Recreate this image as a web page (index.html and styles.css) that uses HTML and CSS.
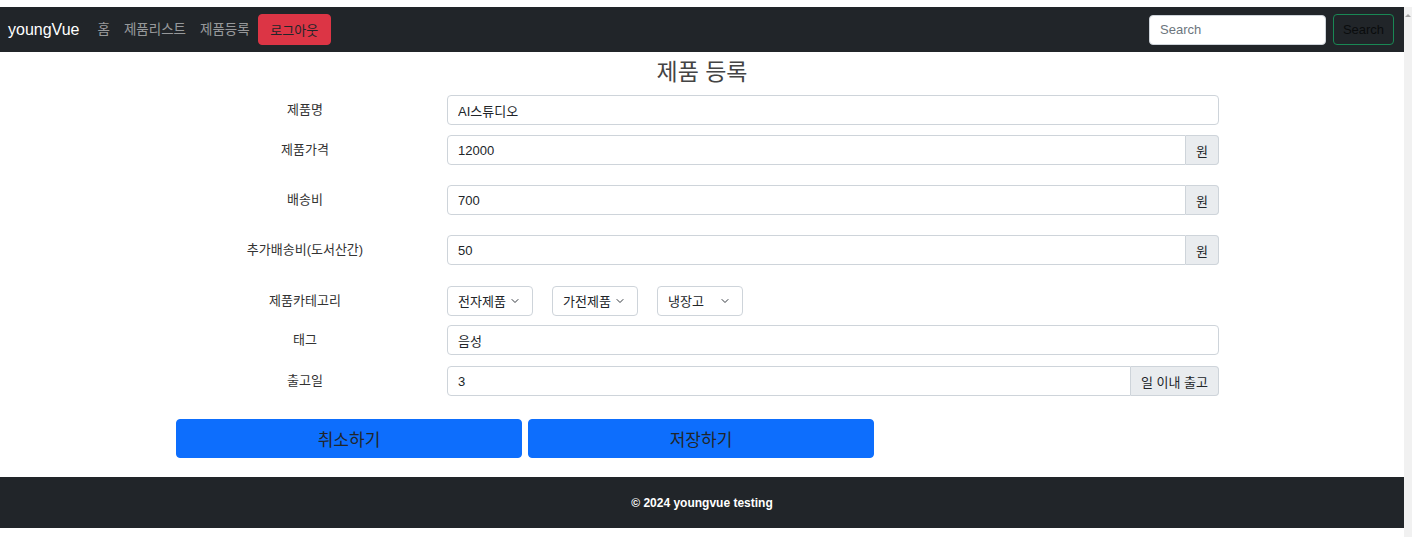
FILE: index.html
```html
<!DOCTYPE html>
<html lang="ko">
<head>
<meta charset="utf-8">
<title>youngVue - 제품 등록</title>
<link rel="stylesheet" href="styles.css">
</head>
<body>
<div class="top-strip"></div>
<div class="shell">
  <div class="page">
    <nav class="navbar">
      <a class="brand" href="#">youngVue</a>
      <ul class="nav-links">
        <li><a href="#">홈</a></li>
        <li><a href="#">제품리스트</a></li>
        <li><a href="#">제품등록</a></li>
      </ul>
      <button class="btn-logout" type="button">로그아웃</button>
      <form class="search">
        <input class="search-input" type="text" placeholder="Search">
        <button class="search-btn" type="button">Search</button>
      </form>
    </nav>

    <main class="content">
      <h2 class="title">제품 등록</h2>
      <form class="product-form">
        <div class="form-row mb-10">
          <label class="form-label">제품명</label>
          <input class="form-control" type="text" value="AI스튜디오">
        </div>
        <div class="form-row mb-20">
          <label class="form-label">제품가격</label>
          <div class="input-group">
            <input class="form-control" type="text" value="12000">
            <span class="group-text">원</span>
          </div>
        </div>
        <div class="form-row mb-20">
          <label class="form-label">배송비</label>
          <div class="input-group">
            <input class="form-control" type="text" value="700">
            <span class="group-text">원</span>
          </div>
        </div>
        <div class="form-row mb-21">
          <label class="form-label">추가배송비(도서산간)</label>
          <div class="input-group">
            <input class="form-control" type="text" value="50">
            <span class="group-text">원</span>
          </div>
        </div>
        <div class="form-row mb-9">
          <label class="form-label">제품카테고리</label>
          <div class="selects">
            <select class="form-select"><option>전자제품</option></select>
            <select class="form-select"><option>가전제품</option></select>
            <select class="form-select"><option>냉장고</option></select>
          </div>
        </div>
        <div class="form-row mb-11">
          <label class="form-label">태그</label>
          <input class="form-control" type="text" value="음성">
        </div>
        <div class="form-row">
          <label class="form-label">출고일</label>
          <div class="input-group">
            <input class="form-control" type="text" value="3">
            <span class="group-text">일 이내 출고</span>
          </div>
        </div>
        <div class="actions">
          <button class="btn-primary" type="button">취소하기</button>
          <button class="btn-primary" type="button">저장하기</button>
        </div>
      </form>
    </main>

    <footer class="footer">© 2024 youngvue testing</footer>
    <div class="bottom-strip"></div>
  </div>
  <div class="scrollbar"><span class="scroll-arrow"></span></div>
</div>
</body>
</html>
```

FILE: styles.css
```css
* { box-sizing: border-box; }

html, body {
  margin: 0;
  padding: 0;
  background: #ffffff;
}

body {
  font-family: "Liberation Sans", "Noto Sans CJK KR", Arial, sans-serif;
  font-size: 13px;
  color: #212529;
}

.top-strip {
  height: 7px;
  background: #ffffff;
}

.shell {
  display: flex;
  height: 530px;
}

.page {
  flex: 1;
  display: flex;
  flex-direction: column;
  min-width: 0;
}

.scrollbar {
  width: 8px;
  background: #f1f1f1;
  display: flex;
  justify-content: center;
  padding-top: 7px;
}

.scroll-arrow {
  width: 0;
  height: 0;
  border-left: 3px solid transparent;
  border-right: 3px solid transparent;
  border-bottom: 3px solid #a3a3a3;
}

/* Navbar */
.navbar {
  height: 45px;
  background: #212529;
  display: flex;
  align-items: center;
  padding: 0 10px 0 8px;
}

.brand {
  color: #ffffff;
  text-decoration: none;
  font-size: 16px;
  line-height: 20px;
  margin-right: 11px;
}

.nav-links {
  list-style: none;
  display: flex;
  margin: 0;
  padding: 0;
}

.nav-links a {
  display: block;
  padding: 0 7px;
  color: rgba(255, 255, 255, 0.55);
  text-decoration: none;
  font-size: 13.5px;
  line-height: 20px;
}

.btn-logout {
  height: 31px;
  width: 73px;
  background: #dc3545;
  color: #212529;
  border: 1px solid #dc3545;
  border-radius: 4px;
  font-family: inherit;
  font-size: 13px;
  margin-left: 1px;
  padding: 0;
}

.search {
  margin-left: auto;
  display: flex;
  align-items: center;
  gap: 7px;
}

.search-input {
  width: 177px;
  height: 30px;
  border: 1px solid #ced4da;
  border-radius: 4px;
  background: #ffffff;
  padding: 0 10px;
  font-family: inherit;
  font-size: 13px;
  color: #212529;
}

.search-input::placeholder {
  color: #6c757d;
}

.search-btn {
  width: 61px;
  height: 31px;
  background: transparent;
  border: 1px solid #198754;
  border-radius: 4px;
  color: #0a0c0d;
  font-family: inherit;
  font-size: 13px;
  padding: 0;
}

/* Content */
.content {
  flex: 1;
  background: #ffffff;
}

.title {
  margin: 6px 0 0;
  text-align: center;
  font-size: 23px;
  line-height: 29px;
  font-weight: 400;
  color: #444;
}

.product-form {
  width: 1043px;
  margin: 8px 0 0 176px;
}

.form-row {
  display: grid;
  grid-template-columns: 258px 1fr;
  column-gap: 13px;
  align-items: center;
  height: 30px;
}

.mb-9 { margin-bottom: 9px; }
.mb-10 { margin-bottom: 10px; }
.mb-11 { margin-bottom: 11px; }
.mb-20 { margin-bottom: 20px; }
.mb-21 { margin-bottom: 21px; }

.form-label {
  text-align: center;
  font-size: 13px;
  color: #333;
  line-height: 20px;
}

.form-control {
  width: 100%;
  height: 30px;
  border: 1px solid #ced4da;
  border-radius: 4px;
  padding: 0 10px;
  font-family: inherit;
  font-size: 13px;
  color: #212529;
  background: #ffffff;
}

.input-group {
  display: flex;
  height: 30px;
}

.input-group .form-control {
  flex: 1;
  border-top-right-radius: 0;
  border-bottom-right-radius: 0;
}

.group-text {
  display: flex;
  align-items: center;
  padding: 0 10px;
  background: #e9ecef;
  border: 1px solid #ced4da;
  border-left: none;
  border-radius: 0 4px 4px 0;
  font-size: 13px;
  color: #212529;
  white-space: nowrap;
}

.selects {
  display: flex;
  gap: 19px;
}

.form-select {
  width: 86px;
  height: 30px;
  appearance: none;
  -webkit-appearance: none;
  border: 1px solid #ced4da;
  border-radius: 4px;
  padding: 0 0 0 10px;
  font-family: inherit;
  font-size: 13px;
  color: #212529;
  background-color: #ffffff;
  background-image: url("data:image/svg+xml,%3csvg xmlns='http://www.w3.org/2000/svg' viewBox='0 0 16 16'%3e%3cpath fill='none' stroke='%23343a40' stroke-linecap='round' stroke-linejoin='round' stroke-width='2' d='m2 5 6 6 6-6'/%3e%3c/svg%3e");
  background-repeat: no-repeat;
  background-position: right 12px center;
  background-size: 10px 8px;
}

.actions {
  display: flex;
  gap: 6px;
  margin: 23px 0 19px;
}

.btn-primary {
  width: 346px;
  height: 39px;
  background: #0d6efd;
  border: 1px solid #0d6efd;
  border-radius: 4px;
  color: #212529;
  font-family: inherit;
  font-size: 17px;
  padding: 0;
}

/* Footer */
.footer {
  height: 51px;
  background: #212529;
  color: #ffffff;
  font-weight: 700;
  font-size: 12px;
  display: flex;
  align-items: center;
  justify-content: center;
}

.bottom-strip {
  height: 9px;
  background: #ffffff;
}
```
